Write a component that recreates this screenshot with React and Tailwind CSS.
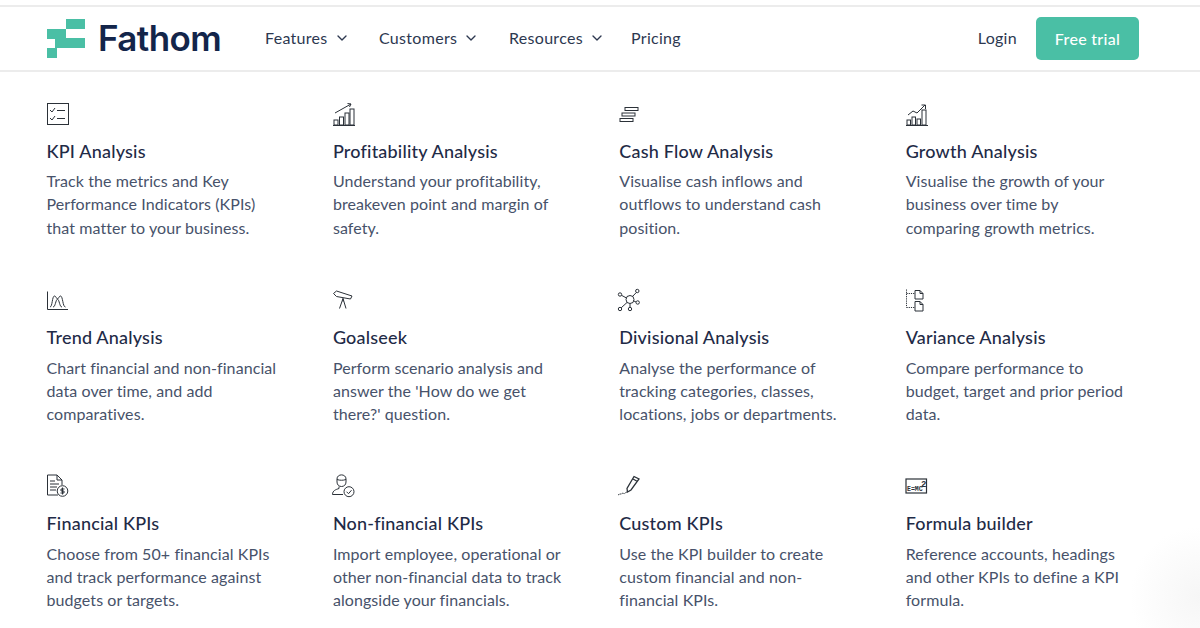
import { ChevronDown } from 'lucide-react';

const Svg = ({ children, w = 24 }) => (
  <svg width={w} height="24" viewBox={`0 0 ${w} 24`} fill="none" stroke="#2b3138" strokeWidth="1" className="block overflow-visible">
    {children}
  </svg>
);

const icons = {
  kpi: (
    <Svg>
      <rect x="0.5" y="1.5" width="21" height="21" />
      <path d="M3 8l2 2 3-4M10 8.500h8M3 16l2 2 3-4M10 16.500h8" />
    </Svg>
  ),
  profit: (
    <Svg>
      <path d="M2 11l16-9M14.500 1.500L18 2l-1.500 3" />
      <path d="M0 23.500h22" />
      <rect x="1" y="18" width="4" height="5" />
      <rect x="6.500" y="15" width="4" height="8" />
      <rect x="12" y="11" width="4" height="12" />
      <rect x="17" y="7" width="4" height="16" />
    </Svg>
  ),
  cash: (
    <Svg>
      <rect x="6" y="5.500" width="13" height="3" />
      <rect x="3" y="11" width="13" height="3" />
      <rect x="1" y="16.500" width="13" height="3" />
    </Svg>
  ),
  growth: (
    <Svg>
      <path d="M2 13l5-4 4 2 8-8M15.500 3H19.500V7" />
      <path d="M0 23.500h22" />
      <rect x="1" y="18" width="3.500" height="5" />
      <rect x="6" y="15" width="3.500" height="8" />
      <rect x="11" y="17" width="3.500" height="6" />
      <rect x="16" y="8" width="4" height="15" />
    </Svg>
  ),
  trend: (
    <Svg>
      <path d="M0.500 3.500v18h20.500" />
      <path d="M3 19c2.500 0 2-11 4.500-11 1.500 0 2 3 3 3s1.500-3 3-3c2.500 0 2 11 5 11" />
      <path d="M6 19c2.500 0 2.500-7 4.500-8M15 19c-2.500 0-2.500-7-4.500-8" />
    </Svg>
  ),
  goal: (
    <Svg>
      <path d="M0.500 5.500L3.500 3l15.500 5-1.500 3L3.500 8.500z" />
      <path d="M10 10.500l-3.500 10M10 10.500l3 10M10 10.500v3" />
    </Svg>
  ),
  division: (
    <Svg>
      <circle cx="11" cy="11.500" r="4" />
      <circle cx="1" cy="6.500" r="1.700" />
      <circle cx="18.300" cy="3" r="1.700" />
      <circle cx="18.700" cy="14.500" r="1.700" />
      <circle cx="1" cy="21" r="1.700" />
      <circle cx="11" cy="21" r="1.700" />
      <path d="M2.500 7.300L7.500 10M17.300 4.500L13.500 8.500M17 14l-2.500-1.200M2.200 19.800L8 14.500M11 19.300v-3.800" />
    </Svg>
  ),
  variance: (
    <Svg>
      <path d="M0.500 1.500v18M0.500 5.500H9M0.500 19.500H9" strokeDasharray="1.200 1" />
      <path d="M9 2.500h5l3 3v5.500H9zM14 2.500v3h3M9 13.500h5l3 3v6.500H9zM14 13.500v3h3" />
    </Svg>
  ),
  financial: (
    <Svg>
      <path d="M11 21H0.500V1h9.500l5 5v5M10 1v5h5" />
      <path d="M3 7h5M3 10h9M3 13h7M3 16h6" />
      <circle cx="15.500" cy="17" r="5.300" />
      <path d="M17.500 15h-3.500v2h3v2h-3.500M15.500 13.500v7" />
    </Svg>
  ),
  nonfin: (
    <Svg>
      <path d="M4 5c0-5.500 9-5.500 9 0v3c0 2.800-2 4.500-4.500 4.500S4 10.800 4 8zM4 5.500c3 1 6 1 9 0" />
      <path d="M6 12.500v2c-3 1-6.500 2-6.500 6h10.500" />
      <circle cx="16" cy="17.700" r="5" />
      <path d="M13.500 17.700l2 2 3-3.500" />
    </Svg>
  ),
  custom: (
    <Svg>
      <path d="M15 2.500l5 2.500-8 11-3.500 2-.5-3.500zM14 5l4.500 2.500" strokeWidth="1.300" />
      <path d="M-1 21c2-1.500 3-.5 4-1.500s2 .8 3-.3 1-.7 2-1.200" strokeDasharray="1.500 0.700" />
    </Svg>
  ),
  formula: (
    <Svg>
      <rect x="0" y="5" width="20.500" height="14" strokeWidth="1.200" />
      <text x="1" y="17" fill="#2b3138" stroke="none" fontSize="6.500" fontFamily="Liberation Mono, monospace" fontWeight="700">E=MC</text>
      <text x="15" y="12.500" fill="#2b3138" stroke="none" fontSize="9" fontFamily="Liberation Mono, monospace" fontWeight="700">2</text>
    </Svg>
  ),
};

const items = [
  { icon: 'kpi', title: 'KPI Analysis', lines: ['Track the metrics and Key', 'Performance Indicators (KPIs)', 'that matter to your business.'] },
  { icon: 'profit', title: 'Profitability Analysis', lines: ['Understand your profitability,', 'breakeven point and margin of', 'safety.'] },
  { icon: 'cash', title: 'Cash Flow Analysis', lines: ['Visualise cash inflows and', 'outflows to understand cash', 'position.'] },
  { icon: 'growth', title: 'Growth Analysis', lines: ['Visualise the growth of your', 'business over time by', 'comparing growth metrics.'] },
  { icon: 'trend', title: 'Trend Analysis', lines: ['Chart financial and non-financial', 'data over time, and add', 'comparatives.'] },
  { icon: 'goal', title: 'Goalseek', lines: ['Perform scenario analysis and', "answer the 'How do we get", "there?' question."] },
  { icon: 'division', title: 'Divisional Analysis', lines: ['Analyse the performance of', 'tracking categories, classes,', 'locations, jobs or departments.'] },
  { icon: 'variance', title: 'Variance Analysis', lines: ['Compare performance to', 'budget, target and prior period', 'data.'] },
  { icon: 'financial', title: 'Financial KPIs', lines: ['Choose from 50+ financial KPIs', 'and track performance against', 'budgets or targets.'] },
  { icon: 'nonfin', title: 'Non-financial KPIs', lines: ['Import employee, operational or', 'other non-financial data to track', 'alongside your financials.'] },
  { icon: 'custom', title: 'Custom KPIs', lines: ['Use the KPI builder to create', 'custom financial and non-', 'financial KPIs.'] },
  { icon: 'formula', title: 'Formula builder', lines: ['Reference accounts, headings', 'and other KPIs to define a KPI', 'formula.'] },
];

const navLinks = [
  { label: 'Features', cls: 'w-[114px]', chevron: true },
  { label: 'Customers', cls: 'w-[130px]', chevron: true },
  { label: 'Resources', cls: 'w-[122px]', chevron: true },
  { label: 'Pricing', cls: '', chevron: false },
];

export default function App() {
  return (
    <div className="h-[628px] w-[1200px] overflow-hidden bg-white bg-[radial-gradient(circle_at_100%_95%,#f6f6f6,#ffffff_70px)] font-['Lato',sans-serif]">
      {/* Header */}
      <header className="mt-[5px] flex h-[67px] items-center border-y-2 border-[#ececec] pl-[47px] pr-[61px]">
        <div className="flex w-[218px] items-center">
          <svg width="39" height="40" viewBox="0 0 39 40" fill="#4abfa5" className="block">
            <rect x="19" y="0" width="19" height="10" />
            <rect x="0" y="10" width="19" height="10" />
            <rect x="8" y="19" width="30" height="10" />
            <rect x="0" y="29" width="10" height="10" />
          </svg>
          <span className="ml-[12px] text-[35px] leading-none font-semibold tracking-[-0.6px] text-[#13254a] font-['Inter',sans-serif]">Fathom</span>
        </div>
        <nav className="-mt-[2px] flex items-center text-[#2d3850]">
          {navLinks.map((link) => (
            <a key={link.label} className={`flex items-center text-base tracking-[0.3px] ${link.cls}`}>
              {link.label}
              {link.chevron && <ChevronDown className="ml-[6px] h-[16px] w-[16px]" strokeWidth={2} />}
            </a>
          ))}
        </nav>
        <div className="ml-auto flex items-center gap-[19px]">
          <a className="-mt-[2px] text-base tracking-[0.3px] text-[#2d3850]">Login</a>
          <button className="flex h-[43px] w-[103px] items-center justify-center rounded-[5px] bg-[#4abfa5] text-base font-medium tracking-[0.3px] text-white">Free trial</button>
        </div>
      </header>

      {/* Feature grid */}
      <section className="grid grid-cols-[286.4px_286.4px_286.4px_1fr] gap-y-[49.75px] pt-[29.6px] pl-[46.5px]">
        {items.map((item) => (
          <div key={item.title} className="h-[136.5px]">
            <div className="h-6">{icons[item.icon]}</div>
            <h3 className="mt-[13px] text-lg leading-6 font-medium tracking-[0.2px] text-[#1f2b47]">{item.title}</h3>
            <p className="mt-[6.7px] text-base leading-[23.2px] tracking-[0.08px] text-[#47526a]">
              {item.lines.map((line) => (
                <span key={line} className="block whitespace-nowrap">{line}</span>
              ))}
            </p>
          </div>
        ))}
      </section>
    </div>
  );
}
